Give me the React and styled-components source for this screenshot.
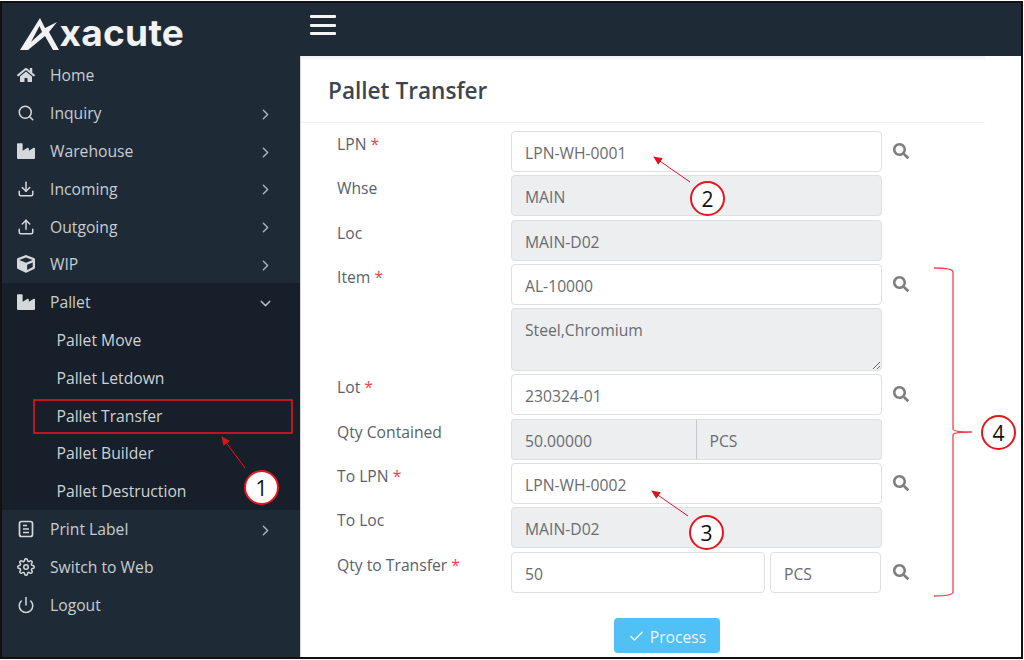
import React from "react";
import styled, { createGlobalStyle } from "styled-components";
import { FaHome, FaIndustry, FaCube, FaSearch } from "react-icons/fa";
import { FiSearch, FiChevronRight, FiChevronDown, FiPower, FiSettings, FiCheck } from "react-icons/fi";
import { LuDownload, LuUpload } from "react-icons/lu";

const Global = createGlobalStyle`
  html, body { margin: 0; padding: 0; background: #fff; }
  body { font-family: "Open Sans", "Noto Sans", sans-serif; }
  * { box-sizing: border-box; }
`;

const Frame = styled.div`
  position: relative;
  width: 1023px;
  height: 658px;
  margin-top: 1px;
  border: 2px solid #111;
  display: flex;
  overflow: hidden;
  background: #fff;
`;

const Sidebar = styled.aside`
  width: 298px;
  flex: none;
  background: #1e2b37;
  display: flex;
  flex-direction: column;
`;

const Brand = styled.div`
  height: 53.6px;
  flex: none;
  display: flex;
  align-items: flex-end;
  padding: 0 0 4px 18px;
`;

const BrandName = styled.span`
  font: 700 37px/40px Inter, sans-serif;
  color: #f2f2f2;
  letter-spacing: 0.3px;
  margin-left: -2.5px;
`;

const MenuRow = styled.div`
  height: 37.8px;
  flex: none;
  display: flex;
  align-items: center;
  padding: 0 26px 0 15px;
  color: #c8cdd1;
  font-size: 15.7px;
  background: ${(p) => (p.$dark ? "#17202a" : "transparent")};
`;

const MenuIcon = styled.span`
  width: 33px;
  flex: none;
  display: flex;
  align-items: center;
  font-size: 18px;
  color: #d4d8db;
`;

const MenuLabel = styled.span`
  flex: 1;
`;

const Chevron = styled.span`
  display: flex;
  font-size: 17px;
  margin-top: 2px;
  color: #aeb5ba;
`;

const SubRow = styled(MenuRow)`
  padding-left: 54.5px;
  color: #ced2d5;
  background: #17202a;
`;

const Main = styled.main`
  flex: 1;
  min-width: 0;
  display: flex;
  flex-direction: column;
`;

const TopBar = styled.header`
  height: 53px;
  flex: none;
  background: #1e2b37;
  display: flex;
  align-items: center;
  padding-left: 10px;
`;

const Burger = styled.div`
  width: 26px;
  display: flex;
  flex-direction: column;
  gap: 5.5px;
  margin-top: -9px;
  span {
    height: 3px;
    border-radius: 1px;
    background: #f4f4f4;
  }
`;

const Card = styled.section`
  width: 685px;
  flex: 1;
  border-left: 1px solid #d5d8da;
`;

const CardHead = styled.div`
  height: 67px;
  display: flex;
  align-items: center;
  padding: 2px 0 0 27px;
  border-bottom: 1px solid #f1f1f1;
  box-shadow: inset 0 5px 5px -4px #e8e8e8;
`;

const Title = styled.h1`
  margin: 0;
  font-size: 22.6px;
  font-weight: 600;
  color: #3c4650;
`;

const Form = styled.form`
  padding: 8px 0 0 36px;
  display: flex;
  flex-direction: column;
  gap: 3.3px;
`;

const Row = styled.div`
  display: grid;
  grid-template-columns: 174px 371px 38px;
  align-items: start;
`;

const Label = styled.label`
  font-size: 15.7px;
  line-height: 24px;
  color: #59626a;
  height: 24px;
  margin-top: 1px;
  em {
    font-style: normal;
    color: #f0414c;
  }
`;

const Input = styled.input`
  display: block;
  width: 100%;
  height: 41px;
  padding: 3px 13px 0;
  border: 1.5px solid #dedfe1;
  border-radius: 4px;
  font: 15.7px "Open Sans", sans-serif;
  color: #686c70;
  background: ${(p) => (p.readOnly ? "#eceef0" : "#fff")};
  outline: none;
`;

const TextArea = styled.textarea`
  display: block;
  width: 100%;
  height: 63px;
  padding: 10px 13px;
  border: 1.5px solid #dedfe1;
  border-radius: 4px;
  font: 15.7px/22px "Open Sans", sans-serif;
  color: #686c70;
  background: #eceef0;
  outline: none;
`;

const Joined = styled.div`
  display: grid;
  grid-template-columns: 184.5px 1fr;
  input:first-child {
    border-radius: 4px 0 0 4px;
    border-right: 0;
  }
  input:last-child {
    border-radius: 0 4px 4px 0;
    border-left: 1.5px solid #c6c9cc;
  }
`;

const Split = styled.div`
  display: grid;
  grid-template-columns: 254px 111px;
  gap: 5px;
`;

const LookUp = styled.button`
  height: 41px;
  padding: 0 0 1px 11px;
  border: 0;
  background: none;
  display: flex;
  align-items: center;
  font-size: 16px;
  color: #7c7f7c;
`;

const Actions = styled.div`
  padding: 22px 0 0 277px;
`;

const Process = styled.button`
  width: 106px;
  height: 35px;
  border: 0;
  border-radius: 4px;
  background: #50c0f5;
  color: #e9f7fe;
  font: 15.7px "Open Sans", sans-serif;
  display: flex;
  align-items: center;
  justify-content: center;
  gap: 5px;
  padding: 3px 0 0;
`;

const Marks = styled.svg`
  position: absolute;
  left: -2px;
  top: -3px;
  width: 1024px;
  height: 660px;
  pointer-events: none;
`;

const Callout = styled.div`
  position: absolute;
  left: ${(p) => p.$x - 19}px;
  top: ${(p) => p.$y - 20}px;
  width: 35px;
  height: 35px;
  border: 2px solid #e8141c;
  border-radius: 50%;
  background: #fff;
  color: #111;
  display: flex;
  align-items: center;
  justify-content: center;
  font-size: 21px;
`;

const PrintIcon = () => (
  <svg width="18" height="18" viewBox="0 0 18 18" fill="none" stroke="currentColor" strokeWidth="1.7">
    <rect x="2.5" y="1.5" width="13" height="15" rx="2" />
    <path d="M6 5.5h4M6 9h6M6 12.5h6" />
  </svg>
);

const menuTop = [
  { icon: <FaHome />, label: "Home" },
  { icon: <FiSearch />, label: "Inquiry", more: true },
  { icon: <FaIndustry />, label: "Warehouse", more: true },
  { icon: <LuDownload />, label: "Incoming", more: true },
  { icon: <LuUpload />, label: "Outgoing", more: true },
  { icon: <FaCube />, label: "WIP", more: true },
];
const subMenu = ["Pallet Move", "Pallet Letdown", "Pallet Transfer", "Pallet Builder", "Pallet Destruction"];
const menuEnd = [
  { icon: <PrintIcon />, label: "Print Label", more: true },
  { icon: <FiSettings />, label: "Switch to Web" },
  { icon: <FiPower />, label: "Logout" },
];

const Item = ({ icon, label, more }) => (
  <MenuRow>
    <MenuIcon>{icon}</MenuIcon>
    <MenuLabel>{label}</MenuLabel>
    {more && <Chevron><FiChevronRight /></Chevron>}
  </MenuRow>
);

const Search = () => (
  <LookUp type="button" aria-label="Search"><FaSearch /></LookUp>
);

const App = () => (
  <Frame>
    <Global />
    <Sidebar>
      <Brand>
        <svg width="42" height="36" viewBox="0 0 42 36">
          <path d="M0 33 L20 1 L25 11 L37 5 L29 15 L39 33 L33 33 L25 19 L8 33 Z M11 25 L22 15 L19.5 9 Z" fill="#f2f2f2" fillRule="evenodd" />
        </svg>
        <BrandName>xacute</BrandName>
      </Brand>
      {menuTop.map((m) => <Item key={m.label} {...m} />)}
      <MenuRow $dark>
        <MenuIcon><FaIndustry /></MenuIcon>
        <MenuLabel>Pallet</MenuLabel>
        <Chevron><FiChevronDown /></Chevron>
      </MenuRow>
      {subMenu.map((s) => <SubRow key={s}>{s}</SubRow>)}
      {menuEnd.map((m) => <Item key={m.label} {...m} />)}
    </Sidebar>
    <Main>
      <TopBar>
        <Burger><span /><span /><span /></Burger>
      </TopBar>
      <Card>
        <CardHead><Title>Pallet Transfer</Title></CardHead>
        <Form>
          <Row>
            <Label>LPN <em>*</em></Label>
            <Input defaultValue="LPN-WH-0001" />
            <Search />
          </Row>
          <Row>
            <Label>Whse</Label>
            <Input readOnly defaultValue="MAIN" />
          </Row>
          <Row>
            <Label>Loc</Label>
            <Input readOnly defaultValue="MAIN-D02" />
          </Row>
          <Row>
            <Label>Item <em>*</em></Label>
            <Input defaultValue="AL-10000" />
            <Search />
          </Row>
          <Row>
            <span />
            <TextArea readOnly defaultValue="Steel,Chromium" />
          </Row>
          <Row>
            <Label>Lot <em>*</em></Label>
            <Input defaultValue="230324-01" />
            <Search />
          </Row>
          <Row>
            <Label>Qty Contained</Label>
            <Joined>
              <Input readOnly defaultValue="50.00000" />
              <Input readOnly defaultValue="PCS" />
            </Joined>
          </Row>
          <Row>
            <Label>To LPN <em>*</em></Label>
            <Input defaultValue="LPN-WH-0002" />
            <Search />
          </Row>
          <Row>
            <Label>To Loc</Label>
            <Input readOnly defaultValue="MAIN-D02" />
          </Row>
          <Row>
            <Label>Qty to Transfer <em>*</em></Label>
            <Split>
              <Input defaultValue="50" />
              <Input defaultValue="PCS" />
            </Split>
            <Search />
          </Row>
          <Actions>
            <Process type="button"><FiCheck size={17} /> Process</Process>
          </Actions>
        </Form>
      </Card>
    </Main>
    <Marks viewBox="0 0 1024 660" fill="none" stroke="#e8141c">
      <rect x="34" y="400" width="258" height="33" strokeWidth="1.6" />
      <defs>
        <marker id="head" markerWidth="9" markerHeight="8" refX="8" refY="4" orient="auto" markerUnits="userSpaceOnUse">
          <path d="M0 0 L9 4 L0 8 Z" fill="#d8141c" stroke="none" />
        </marker>
      </defs>
      <path d="M245 468 L222 437" strokeWidth="1" markerEnd="url(#head)" />
      <path d="M690 182 L654 157" strokeWidth="1" markerEnd="url(#head)" />
      <path d="M688 516 L652 491" strokeWidth="1" markerEnd="url(#head)" />
      <path d="M934 268 Q953 268 953 272 L953 429 Q953 432 972 432 Q953 432 953 435 L953 592 Q953 596 934 596" stroke="#f0444c" strokeWidth="1.3" />
    </Marks>
    <Callout $x={261} $y={487}>1</Callout>
    <Callout $x={707} $y={198}>2</Callout>
    <Callout $x={706} $y={532}>3</Callout>
    <Callout $x={998} $y={432}>4</Callout>
  </Frame>
);

export default App;
